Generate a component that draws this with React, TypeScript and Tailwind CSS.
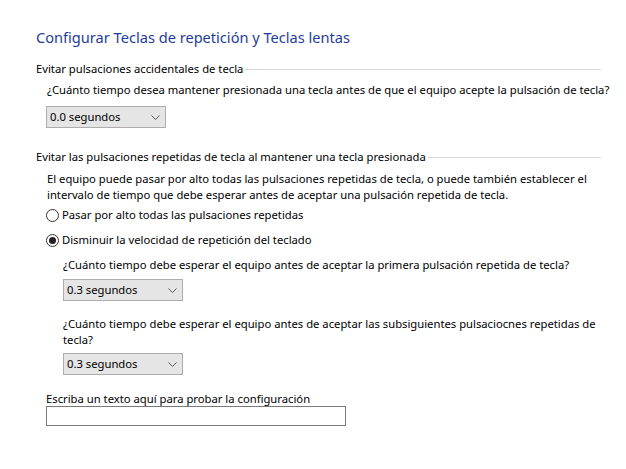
import React from 'react';

function Chevron() {
  return (
    <svg width="9" height="5" viewBox="0 0 9 5" className="shrink-0">
      <polyline points="0.5,0.5 4.5,4.5 8.5,0.5" fill="none" stroke="#555" strokeWidth="1" />
    </svg>
  );
}

function Combo({ value }: { value: string }) {
  return (
    <div className="flex h-[22px] w-[120px] items-center justify-between border border-[#adadad] bg-[#e5e5e5] pl-[3px] pr-[5px] leading-none">
      <span>{value}</span>
      <Chevron />
    </div>
  );
}

function GroupHeader({ text }: { text: string }) {
  return (
    <div className="flex w-[565px] items-center leading-[16px]">
      <span>{text}</span>
      <div className="ml-[2px] h-px flex-1 bg-[#d6d6d6]" />
    </div>
  );
}

function Radio({ checked, label }: { checked?: boolean; label: string }) {
  return (
    <label className="flex items-center leading-[16px]">
      <span className="mr-[3px] flex h-[13px] w-[13px] items-center justify-center rounded-full border border-[#333]">
        {checked && <span className="h-[7px] w-[7px] rounded-full bg-[#222]" />}
      </span>
      {label}
    </label>
  );
}

export default function App() {
  return (
    <div
      className="h-[469px] w-[626px] whitespace-nowrap bg-white pl-[36px] pt-[27px] text-[11.25px] text-black"
      style={{ fontFamily: '"Noto Sans", "Open Sans", sans-serif' }}
    >
      <h1 className="text-[14.6px] leading-[21px] text-[#1e3d99]">Configurar Teclas de repetición y Teclas lentas</h1>

      <div className="mt-[13px]">
        <GroupHeader text="Evitar pulsaciones accidentales de tecla" />
        <div className="ml-[11px] mt-[5px] leading-[16px]">
          ¿Cuánto tiempo desea mantener presionada una tecla antes de que el equipo acepte la pulsación de tecla?
        </div>
        <div className="ml-[10px] mt-[8px]">
          <Combo value="0.0 segundos" />
        </div>
      </div>

      <div className="mt-[21px]">
        <GroupHeader text="Evitar las pulsaciones repetidas de tecla al mantener una tecla presionada" />
        <p className="ml-[11px] mt-[6px] leading-[16px]">
          El equipo puede pasar por alto todas las pulsaciones repetidas de tecla, o puede también establecer el
          <br />
          intervalo de tiempo que debe esperar antes de aceptar una pulsación repetida de tecla.
        </p>
        <div className="ml-[10px] mt-[4px]">
          <Radio label="Pasar por alto todas las pulsaciones repetidas" />
        </div>
        <div className="ml-[10px] mt-[9px]">
          <Radio checked label="Disminuir la velocidad de repetición del teclado" />
        </div>
        <div className="ml-[27px]">
          <div className="mt-[9px] leading-[16px]">
            ¿Cuánto tiempo debe esperar el equipo antes de aceptar la primera pulsación repetida de tecla?
          </div>
          <div className="mt-[6px]">
            <Combo value="0.3 segundos" />
          </div>
          <div className="mt-[15px] leading-[16px]">
            ¿Cuánto tiempo debe esperar el equipo antes de aceptar las subsiguientes pulsaciocnes repetidas de
            <br />
            tecla?
          </div>
          <div className="mt-[5px]">
            <Combo value="0.3 segundos" />
          </div>
        </div>
      </div>

      <div className="ml-[10px] mt-[17px]">
        <div className="leading-[14px]">Escriba un texto aquí para probar la configuración</div>
        <input type="text" className="block h-[20px] w-[300px] border border-[#7a7a7a] bg-white outline-none" />
      </div>
    </div>
  );
}
